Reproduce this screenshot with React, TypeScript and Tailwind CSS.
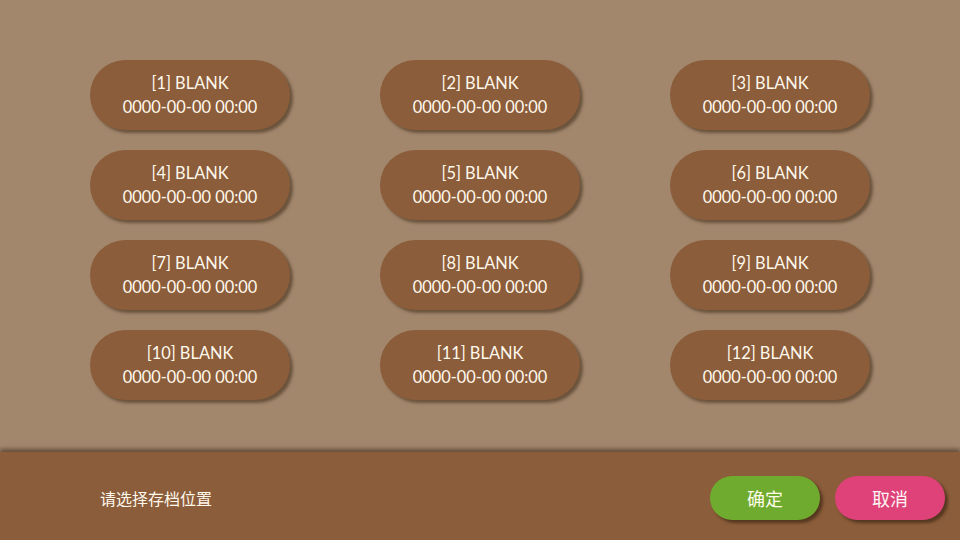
import React from "react";

const slots = Array.from({ length: 12 }, (_, i) => i + 1);

export default function App() {
  return (
    <div
      className="w-[960px] h-[540px] flex flex-col bg-[#a2876d] overflow-hidden"
      style={{ fontFamily: "Lato, 'Noto Sans CJK SC', sans-serif" }}
    >
      <div className="flex-1 pt-[60px] px-[90px]">
        <div className="grid grid-cols-3 gap-x-[90px] gap-y-[20px]">
          {slots.map((n) => (
            <button
              key={n}
              className="w-[200px] h-[70px] rounded-full bg-[#8b5d3a] text-[#fff8ec] text-[16.4px] leading-[24px] flex flex-col items-center justify-center shadow-[3px_3px_3px_rgba(60,40,20,0.55)]"
            >
              <span>[{n}] BLANK</span>
              <span>0000-00-00 00:00</span>
            </button>
          ))}
        </div>
      </div>
      <div className="h-[88px] pt-[4px] bg-[#8b5d3a] shadow-[0_-3px_4px_rgba(60,40,20,0.6)] flex items-center pl-[100px] pr-[15px]">
        <span
          className="text-[#fff8ec] text-[16px]"
          style={{ fontFamily: "'Noto Sans CJK SC', sans-serif" }}
        >
          请选择存档位置
        </span>
        <div className="ml-auto flex gap-[15px]">
          <button
            className="w-[110px] h-[44px] rounded-full bg-[#6fab2e] text-[#fffbe8] text-[18px] shadow-[3px_3px_3px_rgba(50,30,15,0.6)]"
            style={{ fontFamily: "'Noto Sans CJK SC', sans-serif" }}
          >
            确定
          </button>
          <button
            className="w-[110px] h-[44px] rounded-full bg-[#de4279] text-[#fff4f4] text-[18px] shadow-[3px_3px_3px_rgba(50,30,15,0.6)]"
            style={{ fontFamily: "'Noto Sans CJK SC', sans-serif" }}
          >
            取消
          </button>
        </div>
      </div>
    </div>
  );
}
